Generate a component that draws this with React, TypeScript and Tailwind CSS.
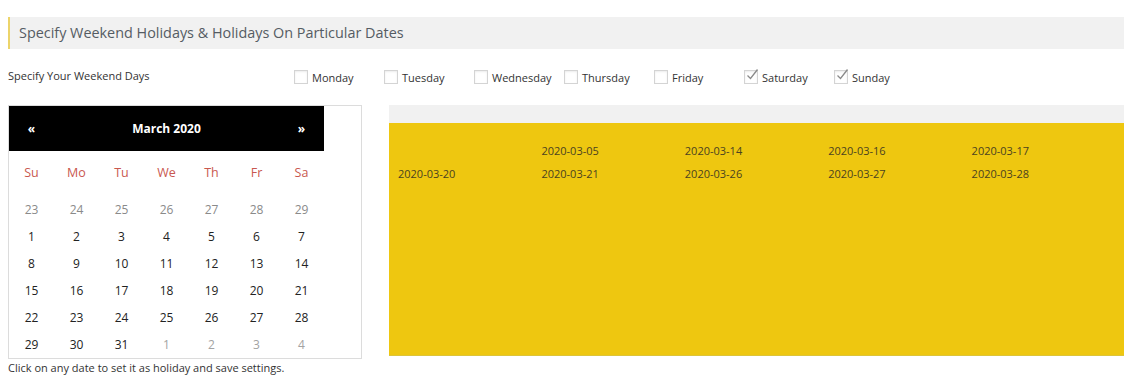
import React from "react";

const days = [
  { n: "Monday", c: false },
  { n: "Tuesday", c: false },
  { n: "Wednesday", c: false },
  { n: "Thursday", c: false },
  { n: "Friday", c: false },
  { n: "Saturday", c: true },
  { n: "Sunday", c: true },
];

type Cell = { d: number; t: "prev" | "cur" | "next" };
const weeks: Cell[][] = [
  [23, 24, 25, 26, 27, 28, 29].map((d) => ({ d, t: "prev" as const })),
  [1, 2, 3, 4, 5, 6, 7].map((d) => ({ d, t: "cur" as const })),
  [8, 9, 10, 11, 12, 13, 14].map((d) => ({ d, t: "cur" as const })),
  [15, 16, 17, 18, 19, 20, 21].map((d) => ({ d, t: "cur" as const })),
  [22, 23, 24, 25, 26, 27, 28].map((d) => ({ d, t: "cur" as const })),
  [
    { d: 29, t: "cur" },
    { d: 30, t: "cur" },
    { d: 31, t: "cur" },
    { d: 1, t: "next" },
    { d: 2, t: "next" },
    { d: 3, t: "next" },
    { d: 4, t: "next" },
  ],
];

const dateRows = [
  ["", "2020-03-05", "2020-03-14", "2020-03-16", "2020-03-17"],
  ["2020-03-20", "2020-03-21", "2020-03-26", "2020-03-27", "2020-03-28"],
];

function Check({ checked }: { checked: boolean }) {
  return (
    <span className="relative inline-block w-[14px] h-[14px] border border-[#d4d4d4] bg-white shadow-[inset_0_1px_2px_rgba(0,0,0,0.08)] shrink-0">
      {checked && (
        <svg className="absolute left-[1px] top-[-3px]" width="13" height="13" viewBox="0 0 13 13">
          <path d="M1.5 7.5 L4.5 10.5 L11.5 1.5" fill="none" stroke="#8a8a8a" strokeWidth="1.3" />
        </svg>
      )}
    </span>
  );
}

export default function App() {
  return (
    <div className="w-[1134px] h-[387px] bg-white font-['Open_Sans',sans-serif] text-[#333] pl-[8px] pr-[10px] pt-[17px] overflow-hidden">
      <div className="h-[32px] bg-[#f1f1f1] border-l-2 border-[#ecd46a] flex items-center pl-[9px] text-[14.4px] text-[#555c63]">
        Specify Weekend Holidays &amp; Holidays On Particular Dates
      </div>

      <div className="flex items-start mt-[19px] h-[18px]">
        <div className="w-[286px] text-[11px] leading-[16px] text-[#333]">Specify Your Weekend Days</div>
        <div className="flex">
          {days.map((d) => (
            <div key={d.n} className="w-[90px] flex items-center gap-[4px]">
              <Check checked={d.c} />
              <span className="text-[11px] leading-[16px] mt-[2px] text-[#333]">{d.n}</span>
            </div>
          ))}
        </div>
      </div>

      <div className="flex items-start mt-[19px]">
        <div className="flex flex-col">
          <div className="w-[354px] border border-[#dcdcdc] bg-white">
            <div className="w-[315px] h-[45px] bg-black grid grid-cols-7 items-center text-white text-[12px] font-bold">
              <div className="text-center">«</div>
              <div className="col-span-5 text-center">March 2020</div>
              <div className="text-center">»</div>
            </div>
            <div className="w-[315px] h-[45px] grid grid-cols-7 items-center text-[12.5px] text-[#c9584f]">
              {["Su", "Mo", "Tu", "We", "Th", "Fr", "Sa"].map((s) => (
                <div key={s} className="text-center">{s}</div>
              ))}
            </div>
            {weeks.map((w, i) => (
              <div key={i} className="w-[315px] h-[27px] grid grid-cols-7 items-center text-[12px]">
                {w.map((c, j) => (
                  <div
                    key={j}
                    className={
                      "text-center " +
                      (c.t === "prev" ? "text-[#8a8a8a]" : c.t === "next" ? "text-[#a3a3a3]" : "text-[#222]")
                    }
                  >
                    {c.d}
                  </div>
                ))}
              </div>
            ))}
          </div>
          <div className="text-[11px] leading-[16px] mt-[1px] text-[#333]">
            Click on any date to set it as holiday and save settings.
          </div>
        </div>

        <div className="ml-[27px] flex-1 flex flex-col">
          <div className="h-[18px] bg-[#f1f1f1]" />
          <div className="h-[233px] bg-[#eec710] border-b border-[#dcc43a] px-[9px] pt-[17px]">
            {dateRows.map((r, i) => (
              <div key={i} className="grid grid-cols-5 h-[23px] items-center text-[11px] text-[#4a4220]">
                {r.map((d, j) => (
                  <div key={j}>{d}</div>
                ))}
              </div>
            ))}
          </div>
        </div>
      </div>
    </div>
  );
}
